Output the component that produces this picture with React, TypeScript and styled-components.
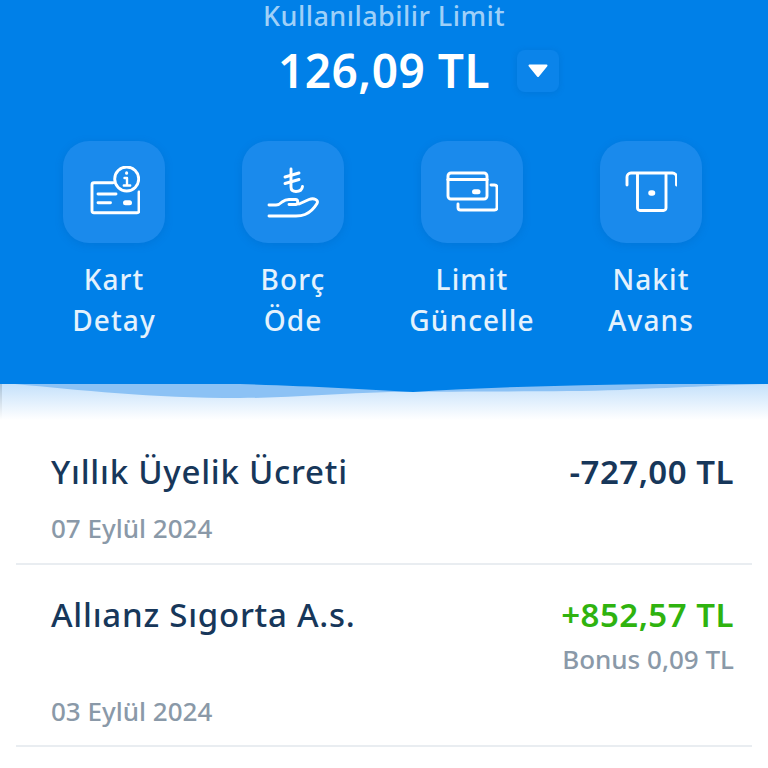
import * as React from 'react';
import styled, { createGlobalStyle } from 'styled-components';

const GlobalStyle = createGlobalStyle`
    html, body {
        margin: 0;
        padding: 0;
        background: #ffffff;
        font-family: 'Noto Sans', 'Open Sans', sans-serif;
    }
`;

const CardInfoIcon = () => (
    <svg width="52" height="52" viewBox="0 0 52 52" fill="none" stroke="#fff" strokeWidth="2.900" strokeLinecap="round" strokeLinejoin="round">
        <path d="M25 16.700H6a2 2 0 0 0-2 2V44.700a2 2 0 0 0 2 2h43a2 2 0 0 0 2-2V26" />
        <circle cx="38.700" cy="13" r="12" />
        <path d="M36.500 12h2.500v7M35.800 19.500h6.400" strokeWidth="2.400" />
        <path d="M38.600 6.800v.4" strokeWidth="3" />
        <path d="M10 28h18M10 36.700h12.500" />
        <path d="M37.500 36.700h4" strokeWidth="5" />
    </svg>
);

const PayIcon = () => (
    <svg width="52" height="52" viewBox="0 0 52 52" fill="none" stroke="#fff" strokeWidth="2.900" strokeLinecap="round" strokeLinejoin="round">
        <path d="M24 3v18c0 3 2 4.500 5 4.500 3 0 6-1.500 6.500-5" />
        <path d="M18 11l14-4M18 17.500l14-4" />
        <path d="M2 39h7c3 0 4.500-1.500 6-3 2-1.500 4-2.500 7-2.500h6.500c3 0 3 5 0 5H22" />
        <path d="M32 38l10-4.500c5-2 10 .5 8 4-3 5-7 9-12 11-3 1.200-6 1.500-9 1.500H2" />
    </svg>
);

const CardsIcon = () => (
    <svg width="52" height="52" viewBox="0 0 52 52" fill="none" stroke="#fff" strokeWidth="2.900" strokeLinecap="round" strokeLinejoin="round">
        <rect x="2" y="7" width="39" height="26" rx="3" />
        <path d="M2 13.500h39" strokeWidth="3.200" />
        <path d="M28.500 25.700h3.500" strokeWidth="5" />
        <path d="M45 19h3.500a2.500 2.500 0 0 1 2.500 2.500V41.500a2.500 2.500 0 0 1-2.500 2.500H14.500a2.500 2.500 0 0 1-2.500-2.500V38" />
    </svg>
);

const AtmIcon = () => (
    <svg width="52" height="52" viewBox="0 0 52 52" fill="none" stroke="#fff" strokeWidth="2.900" strokeLinecap="round" strokeLinejoin="round">
        <path d="M2 19V11a4 4 0 0 1 4-4h41.500a4 4 0 0 1 4 4v8" />
        <path d="M12.500 8V42a2.500 2.500 0 0 0 2.500 2.500H38.500a2.500 2.500 0 0 0 2.500-2.500V8" />
        <path d="M26 27h1.500" strokeWidth="5.500" />
    </svg>
);

const actions = [
    { icon: <CardInfoIcon />, top: 'Kart', bottom: 'Detay' },
    { icon: <PayIcon />, top: 'Borç', bottom: 'Öde' },
    { icon: <CardsIcon />, top: 'Limit', bottom: 'Güncelle' },
    { icon: <AtmIcon />, top: 'Nakit', bottom: 'Avans' },
];

const App = () => {
    return (
        <Page>
            <GlobalStyle />
            <Header>
                <LimitLabel>Kullanılabilir Limit</LimitLabel>
                <LimitRow>
                    <LimitValue>126,09 TL</LimitValue>
                    <CaretButton>
                        <svg width="22" height="14" viewBox="0 0 22 14">
                            <path d="M2.500 1.500h17L11 12z" fill="#fff" stroke="#fff" strokeWidth="2" strokeLinejoin="round" />
                        </svg>
                    </CaretButton>
                </LimitRow>
                <ActionRow>
                    {actions.map((action) => (
                        <Action key={action.top}>
                            <ActionTile>{action.icon}</ActionTile>
                            <ActionLabel>
                                {action.top}
                                <br />
                                {action.bottom}
                            </ActionLabel>
                        </Action>
                    ))}
                </ActionRow>
            </Header>
            <WaveBand>
                <svg width="768" height="40" viewBox="0 0 768 40" preserveAspectRatio="none">
                    <defs>
                        <linearGradient id="fade" x1="0" y1="0" x2="0" y2="1">
                            <stop offset="0" stopColor="#c5e1fb" />
                            <stop offset="0.9" stopColor="#ffffff" />
                        </linearGradient>
                        <linearGradient id="edge" x1="0" y1="0" x2="0" y2="1">
                            <stop offset="0" stopColor="#a9c3da" />
                            <stop offset="0.9" stopColor="#ffffff" />
                        </linearGradient>
                    </defs>
                    <rect width="768" height="40" fill="url(#fade)" />
                    <path d="M0 40V0H2V40Z" fill="url(#edge)" />
                    <path d="M15 0H768C730 1 690 3 620 6C560 8 480 7 390 8C340 9 290 14 240 14C150 14 80 6 15 0Z" fill="#8cc2f5" />
                    <path d="M0 -1H768V-1C640 0 520 1 413 8C360 5 310 2 240 0H0Z" fill="#0080e8" />
                </svg>
            </WaveBand>
            <Transaction>
                <TransactionMain>
                    <TransactionTitle>Yıllık Üyelik Ücreti</TransactionTitle>
                    <Amounts>
                        <Amount>-727,00 TL</Amount>
                    </Amounts>
                </TransactionMain>
                <TransactionDate>07 Eylül 2024</TransactionDate>
            </Transaction>
            <Transaction>
                <TransactionMain>
                    <TransactionTitle>Allıanz Sıgorta A.s.</TransactionTitle>
                    <Amounts>
                        <Amount $positive>+852,57 TL</Amount>
                        <Bonus>Bonus 0,09 TL</Bonus>
                    </Amounts>
                </TransactionMain>
                <TransactionDate>03 Eylül 2024</TransactionDate>
            </Transaction>
        </Page>
    );
};

export default App;

const Page = styled.div`
    width: 768px;
    height: 768px;
    overflow: hidden;
    background: #ffffff;
`;

const Header = styled.div`
    height: 384px;
    box-sizing: border-box;
    background: #0080e8;
    display: flex;
    flex-direction: column;
    align-items: center;
`;

const LimitLabel = styled.div`
    height: 32px;
    line-height: 32px;
    font-size: 27px;
    font-weight: 500;
    letter-spacing: 0.45px;
    color: #9fd0f8;
`;

const LimitRow = styled.div`
    display: flex;
    align-items: center;
    gap: 27px;
    height: 44px;
    margin-top: 16px;
    padding-left: 69px;
`;

const LimitValue = styled.div`
    font-size: 46px;
    font-weight: 600;
    letter-spacing: 0.5px;
    color: #ffffff;
    line-height: 44px;
`;

const CaretButton = styled.div`
    width: 42px;
    height: 42px;
    margin-top: 2px;
    border-radius: 8px;
    background: #0b84ea;
    box-shadow: 0 1px 6px rgba(0, 70, 150, 0.18);
    display: flex;
    align-items: center;
    justify-content: center;
`;

const ActionRow = styled.div`
    display: flex;
    justify-content: center;
    gap: 77px;
    margin-top: 49px;
    box-sizing: border-box;
    padding-right: 3px;
    width: 100%;
`;

const Action = styled.div`
    width: 102px;
    display: flex;
    flex-direction: column;
    align-items: center;
`;

const ActionTile = styled.div`
    width: 102px;
    height: 102px;
    border-radius: 26px;
    background: #1a8aec;
    box-shadow: 0 2px 8px rgba(0, 70, 150, 0.18);
    display: flex;
    align-items: center;
    justify-content: center;
`;

const ActionLabel = styled.div`
    margin-top: 16px;
    font-size: 28px;
    line-height: 41px;
    font-weight: 500;
    letter-spacing: 1.1px;
    color: #e4f2fd;
    text-align: center;
    white-space: nowrap;
`;

const WaveBand = styled.div`
    height: 40px;

    svg {
        display: block;
    }
`;

const Transaction = styled.div`
    margin: 0 16px;
    padding: 26px 18px 18px 35px;
    border-bottom: 2px solid #e9edf1;

    & + & {
        padding-top: 28px;
        padding-bottom: 17px;
    }
`;

const TransactionMain = styled.div`
    display: flex;
    justify-content: space-between;
    align-items: flex-start;
`;

const TransactionTitle = styled.div`
    font-size: 33px;
    font-weight: 500;
    line-height: 44px;
    letter-spacing: 0.75px;
    color: #17375a;
`;

const Amounts = styled.div`
    display: flex;
    flex-direction: column;
    align-items: flex-end;
`;

const Amount = styled.div<{ $positive?: boolean }>`
    font-size: 33px;
    font-weight: 600;
    line-height: 44px;
    letter-spacing: 0.5px;
    color: ${(props) => (props.$positive ? '#2fb30f' : '#17375a')};
`;

const Bonus = styled.div`
    margin-top: 4px;
    font-size: 26px;
    font-weight: 500;
    line-height: 36px;
    color: #8a99a8;
`;

const TransactionDate = styled.div`
    margin-top: 17px;
    font-size: 26px;
    font-weight: 500;
    line-height: 34px;
    color: #8a99a8;
`;
